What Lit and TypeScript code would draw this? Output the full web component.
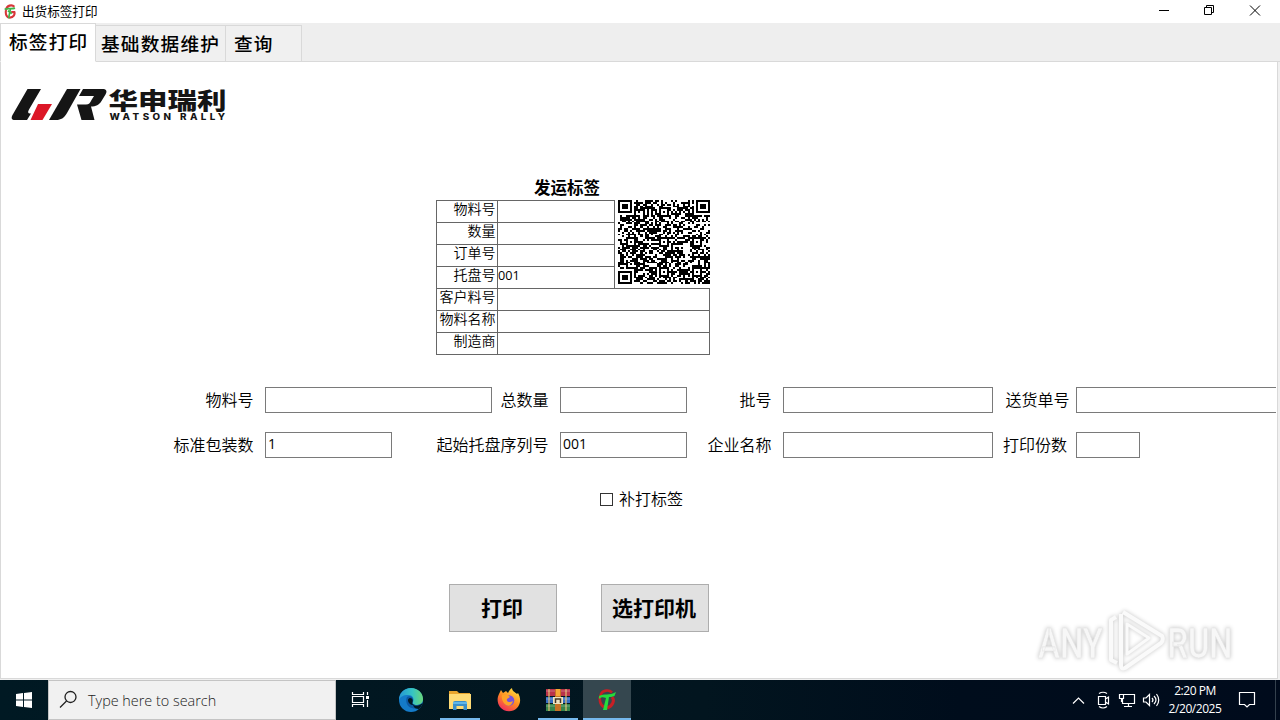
import { LitElement, css, html, svg } from 'lit';
import { customElement, property } from 'lit/decorators.js';

const QR_SIZE = 45;

// 45x45 code: three finders, alignment marks and timing rows over a seeded fill
function qrPath(): string {
  const centers = [6, 22, 38];
  let seed = 20250220;
  let d = '';

  const finder = (x: number, y: number) => {
    const r = Math.max(Math.abs(x - 3), Math.abs(y - 3));
    return r <= 1 || r === 3;
  };

  for (let y = 0; y < QR_SIZE; y++) {
    for (let x = 0; x < QR_SIZE; x++) {
      seed = (Math.imul(seed, 1664525) + 1013904223) >>> 0;
      let on = seed / 4294967296 < 0.54;
      if (x === 6 || y === 6) on = (x + y) % 2 === 0;
      for (const cx of centers) {
        for (const cy of centers) {
          const r = Math.max(Math.abs(x - cx), Math.abs(y - cy));
          if (r <= 2) on = r !== 1;
        }
      }
      if (x < 8 && y < 8) on = finder(x, y);
      if (x > 36 && y < 8) on = finder(x - 38, y);
      if (x < 8 && y > 36) on = finder(x, y - 38);
      if (on) d += `M${x} ${y}h1v1h-1z`;
    }
  }
  return d;
}

const QR = qrPath();

const appMark = svg`
  <path d="M17 4.500C14 1.500 8 2 6 6C3.500 11 5 17 9 19" fill="none" stroke="#c91f25" stroke-width="2.600"/>
  <path d="M17 9C20 12 18 18 12 20" fill="none" stroke="#c91f25" stroke-width="3"/>
  <path d="M4 8C9 5 14 8 21 4L19.500 8C17 9 15 9 14 9L12 22H8L11 10C8 9 6 9 4 11Z" fill="#25dc3c"/>
`;

@customElement('title-bar')
class TitleBar extends LitElement {
  static styles = css`
    :host {
      display: flex;
      align-items: center;
      height: 23px;
      background: #fff;
      font: 12.6px/21px 'Noto Sans CJK SC', sans-serif;
      font-weight: 400;
    }

    .logo {
      width: 13px;
      height: 15px;
      margin: 0 5px 1px 4px;
    }

    .title {
      flex: 1;
      height: 23px;
    }

    .controls {
      display: block;
      width: 138px;
      height: 23px;
    }
  `;

  render() {
    return html`
      <svg class="logo" viewBox="2 0 20 22" preserveAspectRatio="none">
        <path d="M18 4C14 0 6 2 5 9C4 15 6 20 11 20C17 20 19 15 18 12H13" fill="none" stroke="#d8363a" stroke-width="3.2" />
        <path d="M3 8C8 5 12 8 19 6M12 7L9 21M8 10L14 14" fill="none" stroke="#3fb54a" stroke-width="2.6" />
      </svg>
      <span class="title">出货标签打印</span>
      <svg class="controls" viewBox="0 0 138 23" fill="none" stroke="#000">
        <path d="M17 10.5H27M62.500 7.500H69.500V14.500H62.500ZM64.500 7.500V5.500H71.500V12.500H69.500" />
        <path d="M108 5.500L118 15.500M118 5.500L108 15.500" />
      </svg>
    `;
  }
}

@customElement('tab-strip')
class TabStrip extends LitElement {
  static styles = css`
    :host {
      display: flex;
      align-items: flex-end;
      height: 39px;
      background: #eee;
      font: 18.67px/34px 'Noto Sans CJK SC', sans-serif;
      font-weight: 500;
      letter-spacing: 1.2px;
      color: #000;
    }

    .tab {
      box-sizing: border-box;
      height: 37px;
      border: 1px solid #d9d9d9;
      border-left: 0;
      padding-left: 8px;
      background: #f0f0f0;
      white-space: nowrap;
    }

    .active {
      width: 96px;
      height: 39px;
      border-left: 1px solid #d9d9d9;
      border-bottom-color: #fff;
      background: #fff;
    }

    .wide {
      width: 130px;
      padding-left: 5px;
    }

    .last {
      width: 76px;
    }

    .rest {
      flex: 1;
      border-bottom: 1px solid #d9d9d9;
    }
  `;

  render() {
    return html`
      <div class="tab active">标签打印</div>
      <div class="tab wide">基础数据维护</div>
      <div class="tab last">查询</div>
      <div class="rest"></div>
    `;
  }
}

@customElement('company-logo')
class CompanyLogo extends LitElement {
  static styles = css`
    svg {
      display: block;
      width: 220px;
      height: 46px;
    }

    .cn {
      font: 900 22.8px 'Noto Sans CJK SC', sans-serif;
    }

    .en {
      font: 800 8.6px 'Inter', sans-serif;
      letter-spacing: 3px;
    }
  `;

  render() {
    return html`
      <svg viewBox="11 78 220 46" fill="#151515">
        <path d="M27.500 89H41L29 109.500C27.500 112 28 113.500 30 113.500H31L27 120H15C11.500 120 11 118 12.500 115Z" />
        <path d="M38 104H52L42.500 120H30.500Z" fill="#dc1727" />
        <path d="M67 89H80.500L67 113C64 118 61 120 56 120H49Z" />
        <path d="M83 89H102C106.500 89 107.500 91 105.500 94.500L101.500 101C99 105 96 106.500 91 106.500L94.500 120H81.500L77 104.500H86C89 104.500 90 103 91.500 100L94 96H79Z" />
        <text class="cn" x="108.500" y="108.800" textLength="118" lengthAdjust="spacingAndGlyphs">华申瑞利</text>
        <text class="en" x="109.500" y="120" textLength="119" lengthAdjust="spacingAndGlyphs">WATSON RALLY</text>
      </svg>
    `;
  }
}

@customElement('shipping-label')
class ShippingLabel extends LitElement {
  static styles = css`
    :host {
      display: block;
      width: 274px;
      color: #000;
      font: 14px/15px 'Noto Sans CJK SC', sans-serif;
      font-weight: 350;
    }

    .title {
      height: 24px;
      padding-right: 12px;
      font-size: 16.5px;
      font-weight: 600;
      line-height: 23px;
      text-align: center;
    }

    .grid {
      display: grid;
      grid-template-columns: 61px 117px 95px;
      grid-auto-rows: 22px;
      border-left: 1px solid #666;
      border-bottom: 1px solid #666;
    }

    .name,
    .value {
      border-top: 1px solid #666;
      border-right: 1px solid #666;
      white-space: nowrap;
    }

    .name {
      padding-right: 1.5px;
      text-align: right;
    }

    .value {
      font-family: 'Open Sans', sans-serif;
      font-size: 12.7px;
      font-weight: 400;
      line-height: 16px;
    }

    .wide {
      grid-column: 2 / span 2;
    }

    .code {
      grid-area: 1 / 3 / span 4 / span 1;
      width: 92px;
      height: 84px;
      margin-left: 3px;
    }
  `;

  private upper = [
    ['物料号', ''],
    ['数量', ''],
    ['订单号', ''],
    ['托盘号', '001'],
  ];

  private lower = ['客户料号', '物料名称', '制造商'];

  render() {
    return html`
      <div class="title">发运标签</div>
      <div class="grid">
        ${this.upper.map(([name, value]) => html`<div class="name">${name}</div><div class="value">${value}</div>`)}
        <svg class="code" viewBox="0 0 45 45" preserveAspectRatio="none" shape-rendering="crispEdges"><path d=${QR} /></svg>
        ${this.lower.map((name) => html`<div class="name">${name}</div><div class="value wide"></div>`)}
      </div>
    `;
  }
}

@customElement('print-form')
class PrintForm extends LitElement {
  static styles = css`
    :host {
      display: grid;
      grid-template-columns: 264px 227px 68px 127px 96px 210px 83px 200px;
      grid-auto-rows: 26px;
      row-gap: 19px;
      color: #000;
      font: 16px/24px 'Noto Sans CJK SC', sans-serif;
      font-weight: 350;
    }

    label {
      justify-self: end;
      padding-right: 11.5px;
      white-space: nowrap;
    }

    label.near {
      padding-right: 6.5px;
    }

    label.copies {
      padding-right: 9px;
    }

    input {
      box-sizing: border-box;
      width: 100%;
      height: 26px;
      margin: 0;
      border: 1px solid #7a7a7a;
      padding: 0 2px 3px;
      background: #fff;
      color: #000;
      font: 14px 'Open Sans', sans-serif;
      font-weight: 400;
      outline: 0;
    }

    input.medium {
      width: 127px;
    }

    input.small {
      width: 64px;
    }

    input.cut {
      border-right: 0;
    }
  `;

  render() {
    return html`
      <label>物料号</label><input />
      <label>总数量</label><input />
      <label>批号</label><input />
      <label class="near">送货单号</label><input class="cut" />
      <label>标准包装数</label><input class="medium" value="1" />
      <label>起始托盘序列号</label><input value="001" />
      <label>企业名称</label><input />
      <label class="copies">打印份数</label><input class="small" />
    `;
  }
}

@customElement('run-watermark')
class RunWatermark extends LitElement {
  static styles = css`
    svg {
      display: block;
      width: 210px;
      height: 70px;
      overflow: visible;
      filter: drop-shadow(0 0 2px rgba(0, 0, 0, 0.24));
    }

    text {
      font: 500 43px 'Roboto', sans-serif;
      fill: #f7f7f7;
      stroke: #e5e5e5;
      stroke-width: 0.6px;
    }
  `;

  render() {
    return html`
      <svg viewBox="1034 606 210 70">
        <text x="1038" y="658" textLength="65" lengthAdjust="spacingAndGlyphs">ANY</text>
        <text x="1167.500" y="658" textLength="65" lengthAdjust="spacingAndGlyphs">RUN</text>
        <g fill="none" stroke="#fafafa" stroke-width="4" stroke-linejoin="round">
          <path d="M1123 612L1162 636Q1164 640 1161 643L1125 668Q1121 670 1121 665V614" />
          <path d="M1127 624L1149 638L1127 654Z" stroke-width="3" />
          <path d="M1116 617L1111 620V660L1117 663" />
        </g>
      </svg>
    `;
  }
}

@customElement('task-button')
class TaskButton extends LitElement {
  static styles = css`
    :host {
      box-sizing: border-box;
      display: flex;
      flex-direction: column;
      align-items: center;
      width: 49px;
      height: 40px;
    }

    :host([active]) {
      width: 48px;
      margin-left: 1px;
      background: #35474f;
    }

    ::slotted(svg) {
      width: 24px;
      height: 24px;
      margin: 8px 0 6px;
    }

    .line {
      width: 40px;
      height: 2px;
      background: #76b9ed;
    }

    :host([active]) .line {
      width: 48px;
    }
  `;

  @property({ type: Boolean, reflect: true }) active = false;
  @property({ type: Boolean }) open = false;

  render() {
    return html`<slot></slot>${this.open ? html`<div class="line"></div>` : ''}`;
  }
}

@customElement('task-bar')
class TaskBar extends LitElement {
  static styles = css`
    :host {
      display: flex;
      height: 40px;
      background: linear-gradient(90deg, #001923 0%, #02151f 55%, #000d1c 75%, #000b1c 100%);
      color: #fff;
      font-family: 'Open Sans', sans-serif;
    }

    .start {
      width: 48px;
      height: 40px;
    }

    .search {
      box-sizing: border-box;
      display: flex;
      align-items: center;
      width: 288px;
      border: 1px solid #c4c4c4;
      background: #f1f1f1;
      color: #222;
      font-size: 14.4px;
      line-height: 39px;
      font-weight: 350;
    }

    .search svg {
      width: 20px;
      height: 20px;
      margin: 0 9px 2px 10px;
    }

    .apps {
      display: flex;
      flex: 1;
      padding-left: 1px;
    }

    .tray {
      width: 92px;
      height: 40px;
    }

    .clock {
      width: 66px;
      font-size: 12px;
      line-height: 18px;
      letter-spacing: -0.45px;
      text-align: center;
      white-space: nowrap;
      padding-top: 2px;
    }

    .notice {
      width: 52px;
      height: 40px;
    }
  `;

  render() {
    return html`
      <svg class="start" viewBox="0 0 48 40" fill="#fff">
        <path d="M16 14L23 13V19.500H16ZM24 12.900L32 12V19.500H24ZM16 20.500H23V27L16 26ZM24 20.500H32V28L24 27.100Z" />
      </svg>
      <div class="search">
        <svg viewBox="0 0 20 20" fill="none" stroke="#202020" stroke-width="1.300">
          <circle cx="11.500" cy="8" r="5.500" /><path d="M7.500 12L1 18.500" />
        </svg>
        <span>Type here to search</span>
      </div>
      <div class="apps">
        <task-button>
          <svg viewBox="0.500 0 24 24" fill="none" stroke="#fff" stroke-width="1.200">
            <path d="M3 4V6.500H14V4M3 19V16.500H14V19M3 8.500H14V14.500H3ZM18 4V7M18 12V19" />
            <path d="M16.500 8H19.500V11H16.500Z" fill="#fff" stroke="none" />
          </svg>
        </task-button>
        <task-button>
          <svg viewBox="0 0 24 24">
            <defs>
              <linearGradient id="edge-top"><stop offset="0" stop-color="#2596d5" /><stop offset=".55" stop-color="#35c4c4" /><stop offset="1" stop-color="#6ad779" /></linearGradient>
            </defs>
            <circle cx="12" cy="12" r="12" fill="#147bc9" />
            <path d="M0 12C0 5 5 0 12 0C19 0 24 5 24 11C24 15 21 17 17 17C14 17 13 16 14 14C15 12 15 7 9 7C4 7 1 9 0 12Z" fill="url(#edge-top)" />
            <path d="M8 9C11 7 15 10 14 13C13 15 14 17 18 17C20 17 22 16 23 16C20 21 16 21 13 20C8 19 6 13 8 9Z" fill="#0c59a4" />
            <path d="M14 17C16 18.500 20 18 23.500 15C23 18 21 20 20 21C17 21 15 20 14 17Z" fill="#001923" />
            <path d="M11 10C14 10 14 13 13.500 14C12.500 16 14 17 16 17C12 18 9 15 9 12C9 11 10 10 11 10Z" fill="#001923" />
          </svg>
        </task-button>
        <task-button open>
          <svg viewBox="0 0 24 24">
            <path d="M1 3H9L11 5H22V8H1Z" fill="#e9a52d" /><path d="M1 6H23V21H1Z" fill="#ffdb75" />
            <path d="M5 22V15Q5 13 7 13H17Q19 13 19 15V22H15.500V18H8.500V22Z" fill="#3a8fc9" />
            <path d="M5 14H19V16H5Z" fill="#60b6e9" />
          </svg>
        </task-button>
        <task-button>
          <svg viewBox="0 0 24 24">
            <defs><linearGradient id="fox" x1=".8" y1="0" x2=".2" y2="1"><stop stop-color="#ffe442" /><stop offset=".5" stop-color="#ff8a22" /><stop offset="1" stop-color="#ef2463" /></linearGradient></defs>
            <path d="M2 6L4 2L6 5L9 3L11 5C12 3 13 1 15 0C15 3 18 4 20 6L21 5C24 10 24 16 20 20C15 25 7 24 3 19C0 15 0 10 2 6Z" fill="url(#fox)" />
            <circle cx="12" cy="12.500" r="5.300" fill="#7753dc" />
            <path d="M5 7C7 6 9 7 11 7L13 9L10 11C9 14 13 15 16 13C15 17 12 19 9 17C6 15 4 11 5 7Z" fill="#ffa127" />
          </svg>
        </task-button>
        <task-button open>
          <svg viewBox="0 0 24 24">
            <path d="M0 1H24V8H0Z" fill="#b9324a" /><path d="M0 9H24V15H0Z" fill="#366ec2" /><path d="M0 16H24V23H0Z" fill="#36844b" />
            <path d="M3 1V23M20 1V23" stroke="#e0bd70" stroke-width="1.200" /><path d="M0 3H24M0 11H24M0 18H24" stroke="#fff" stroke-opacity=".3" />
            <path d="M9 1H15V23H9Z" fill="#c67225" /><path d="M10 1H14V8H10Z" fill="#f6a637" />
            <path d="M7 9H17V16H7Z" fill="#eee2bf" /><path d="M9.500 15V11H14.500V15" fill="none" stroke="#423323" stroke-width="1.500" />
          </svg>
        </task-button>
        <task-button active open>
          <svg viewBox="0 0 24 24">${appMark}</svg>
        </task-button>
      </div>
      <svg class="tray" viewBox="1070 680 92 40" fill="none" stroke="#fff" stroke-width="1.200">
        <path d="M1073 703.500L1078.500 698L1084 703.500" />
        <path d="M1098.500 696.500H1105.500V704.500H1098.500ZM1105.500 699L1108.500 697V704L1105.500 702M1099 693.500Q1103 691 1107 693.500M1099 706.500Q1103 709.500 1107 706.500" />
        <path d="M1123.500 694.500H1134.500V703.500H1122.500V698M1119.500 694.500H1123.500V698.500H1119.500ZM1128.500 703.500V706.500M1124 706.500H1132M1121.500 698.500V702" />
        <path d="M1143.500 698H1146L1149.500 694.500V705.500L1146 702H1143.500ZM1152 698Q1154 700 1152 702M1154 696Q1158 700 1154 704M1156.500 694Q1161 700 1156.500 706" />
      </svg>
      <div class="clock">2:20 PM<br />2/20/2025</div>
      <svg class="notice" viewBox="0 0 52 40" fill="none" stroke="#fff" stroke-width="1.200">
        <path d="M11.500 12.500H26.500V24.500H21.500L19 27L16.500 24.500H11.500Z" /><path d="M47.500 0V40" stroke="#34414d" stroke-width="1" />
      </svg>
    `;
  }
}

@customElement('app-root')
class AppRoot extends LitElement {
  static styles = css`
    :host {
      position: relative;
      display: flex;
      flex-direction: column;
      width: 1280px;
      height: 720px;
      overflow: hidden;
      background: #fff;
      color: #000;
    }

    .window {
      height: 618px;
      background: #f0f0f0;
    }

    .page {
      box-sizing: border-box;
      display: flex;
      flex-direction: column;
      width: 1278px;
      height: 617px;
      border: 1px solid #d9d9d9;
      border-top: 0;
      background: #fff;
      overflow: hidden;
    }

    company-logo {
      padding: 16px 0 0 10px;
    }

    shipping-label {
      margin: 52px 0 32px 435px;
    }

    .reprint {
      display: flex;
      align-items: center;
      height: 26px;
      margin: 28px 0 72px 599px;
      font: 16px/24px 'Noto Sans CJK SC', sans-serif;
      font-weight: 350;
    }

    .box {
      box-sizing: border-box;
      width: 13px;
      height: 13px;
      margin-right: 6px;
      border: 1px solid #333;
    }

    .caption {
      height: 26px;
    }

    .buttons {
      display: flex;
      gap: 44px;
      padding-left: 448px;
    }

    button {
      width: 108px;
      height: 48px;
      border: 1px solid #adadad;
      padding: 0 2px 3px 0;
      background: #e1e1e1;
      color: #000;
      font: 700 21px 'Noto Sans CJK SC', sans-serif;
      white-space: nowrap;
    }

    run-watermark {
      position: absolute;
      left: 1034px;
      top: 606px;
    }
  `;

  render() {
    return html`
      <title-bar></title-bar>
      <tab-strip></tab-strip>
      <div class="window">
        <div class="page">
          <company-logo></company-logo>
          <shipping-label></shipping-label>
          <print-form></print-form>
          <div class="reprint"><span class="box"></span><span class="caption">补打标签</span></div>
          <div class="buttons">
            <button>打印</button>
            <button>选打印机</button>
          </div>
        </div>
      </div>
      <task-bar></task-bar>
      <run-watermark></run-watermark>
    `;
  }
}
